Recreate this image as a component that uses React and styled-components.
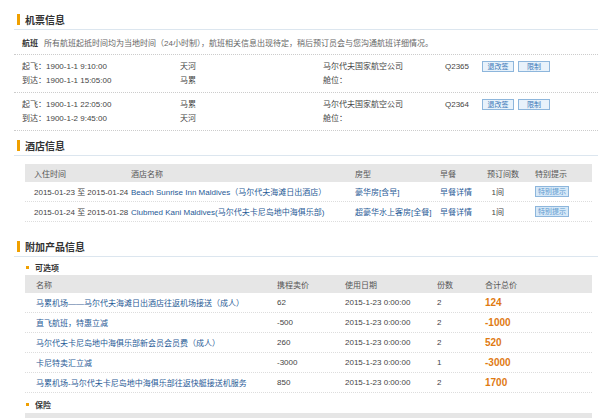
import React from "react";
import styled, { createGlobalStyle } from "styled-components";

const G = createGlobalStyle`
  body{margin:0;background:#fff;font-family:"Liberation Sans","Noto Sans CJK SC",sans-serif;font-size:8px;color:#444;white-space:nowrap;}
`;
const Page = styled.div`padding:9px 2px 0 14px;width:584px;overflow:hidden;`;
const Title = styled.div`
  display:flex;align-items:center;gap:5px;height:20px;border-bottom:1px solid #dce6ef;
  font-size:10px;font-weight:bold;color:#333;padding-left:3px;
  margin-top:${p=>p.$mt||0}px;
  &:before{content:"";width:3px;height:11px;background:#f0a000;}
`;
const Note = styled.div`padding:7px 8px 6px;border-bottom:1px dotted #ccc;color:#666;
  b{color:#333;margin-right:6px;}`;
const Flight = styled.div`display:grid;grid-template-columns:158px 143px 80px 42px 37px auto;
  align-items:center;row-gap:4px;padding:6px 8px 6px;border-bottom:1px dotted #ccc;line-height:10px;`;
const Btn = styled.span`display:inline-block;width:30px;height:9px;border:1px solid #8db6dc;background:#e8f2fb;
  color:#3a78b8;text-align:center;line-height:9px;font-size:7px;margin-right:4px;`;
const Table = styled.div`margin:${p=>p.$m||"8px 6px 0 11px"};`;
const Row = styled.div`display:grid;grid-template-columns:${p=>p.$cols};align-items:center;
  height:${p=>p.$h||19}px;padding-left:${p=>p.$pl||9}px;
  ${p=>p.$head?"background:#e6e6e6;color:#555;":"border-bottom:1px dotted #ddd;"}`;
const Link = styled.span`color:#1f5a96;`;
const Price = styled.span`color:#e07a12;font-weight:bold;font-size:10px;`;
const Sub = styled.div`display:flex;align-items:center;gap:6px;font-weight:bold;color:#333;
  padding-left:12px;height:14px;margin-top:${p=>p.$mt||2}px;font-size:8px;
  &:before{content:"";width:3px;height:3px;background:#f0a000;}`;
const Tip = styled.span`display:inline-block;border:1px solid #8db6dc;background:#d6e8f7;color:#5d9ad0;
  padding:0 2px;line-height:9px;font-size:7px;`;

const hc = "97px 224px 85px 47px 48px auto";
const pc = "241px 68px 92px 48px auto";

const flights = [
  ["起飞：1900-1-1 9:10:00","天河","到达：1900-1-1 15:05:00","马累","Q2365"],
  ["起飞：1900-1-1 22:05:00","马累","到达：1900-1-2 9:45:00","天河","Q2364"],
];
const opts = [
  ["马累机场——马尔代夫海滩日出酒店往返机场接送（成人）","62","2015-1-23 0:00:00","2","124"],
  ["直飞航班，特惠立减","-500","2015-1-23 0:00:00","2","-1000"],
  ["马尔代夫卡尼岛地中海俱乐部新会员会员费（成人）","260","2015-1-23 0:00:00","2","520"],
  ["卡尼特卖汇立减","-3000","2015-1-23 0:00:00","1","-3000"],
  ["马累机场-马尔代夫卡尼岛地中海俱乐部往返快艇接送机服务","850","2015-1-23 0:00:00","2","1700"],
];

export default function App(){
  return <Page><G/>
    <Title>机票信息</Title>
    <Note><b>航班</b>所有航班起抵时间均为当地时间（24小时制），航班相关信息出现待定，稍后预订员会与您沟通航班详细情况。</Note>
    {flights.map((f,i)=><Flight key={i}>
      <span>{f[0]}</span><span>{f[1]}</span><span>马尔代夫国家航空公司</span><span/><span>{f[4]}</span>
      <span><Btn>退改签</Btn><Btn>限制</Btn></span>
      <span>{f[2]}</span><span>{f[3]}</span><span>舱位：</span>
    </Flight>)}
    <Title $mt={4}>酒店信息</Title>
    <Table>
      <Row $head $cols={hc} $h={18}><span>入住时间</span><span>酒店名称</span><span>房型</span><span>早餐</span><span>预订间数</span><span>特别提示</span></Row>
      <Row $cols={hc}><span>2015-01-23 至 2015-01-24</span><Link>Beach Sunrise Inn Maldives（马尔代夫海滩日出酒店）</Link><Link>豪华房[含早]</Link><Link>早餐详情</Link><span>&nbsp;&nbsp;1间</span><span><Tip>特别提示</Tip></span></Row>
      <Row $cols={hc}><span>2015-01-24 至 2015-01-28</span><Link>Clubmed Kani Maldives(马尔代夫卡尼岛地中海俱乐部)</Link><Link>超豪华水上客房[全餐]</Link><Link>早餐详情</Link><span>&nbsp;&nbsp;1间</span><span><Tip>特别提示</Tip></span></Row>
    </Table>
    <Title $mt={14}>附加产品信息</Title>
    <Sub $mt={3}>可选项</Sub>
    <Table $m="1px 6px 0 11px">
      <Row $head $cols={pc} $pl={11} $h={18}><span>名称</span><span>携程卖价</span><span>使用日期</span><span>份数</span><span>合计总价</span></Row>
      {opts.map((o,i)=><Row key={i} $cols={pc} $pl={11}><Link>{o[0]}</Link><span>{o[1]}</span><span>{o[2]}</span><span>{o[3]}</span><Price>{o[4]}</Price></Row>)}
    </Table>
    <Sub $mt={4}>保险</Sub>
    <Table $m="2px 6px 0 11px">
      <Row $head $cols={pc} $pl={11} $h={18}><span>名称</span><span>携程卖价</span><span>使用日期</span><span>份数</span><span>合计总价</span></Row>
      <Row $cols={pc} $pl={11}><Link>平安携程境外短线保险 经典型</Link><span>93</span><span>2015-01-23</span><span>2</span><Price>186</Price></Row>
    </Table>
  </Page>;
}
